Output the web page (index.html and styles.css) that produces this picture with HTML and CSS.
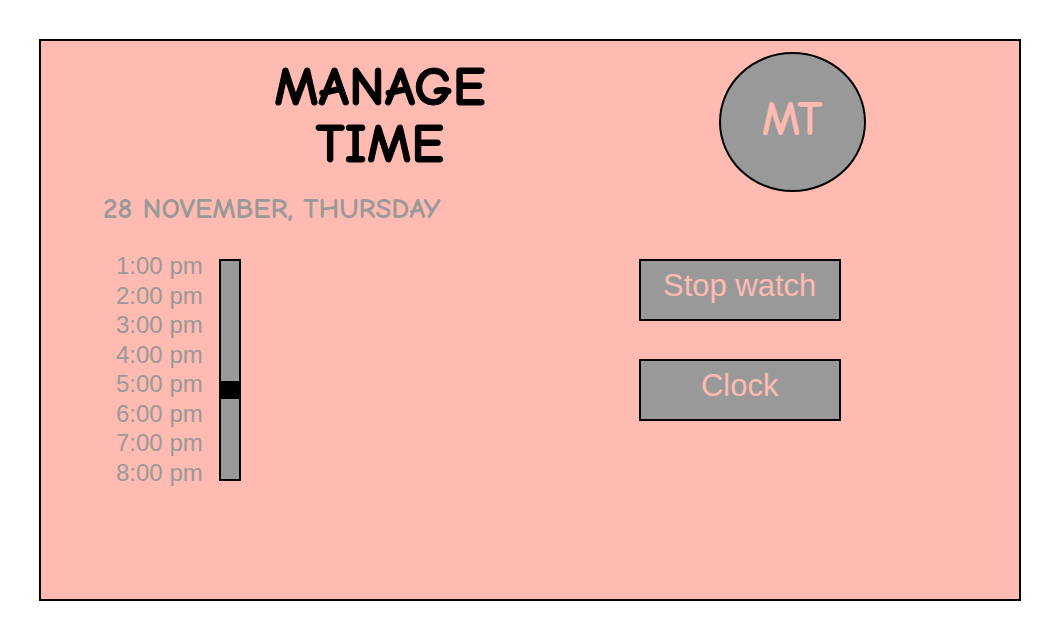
FILE: index.html
```html
<!DOCTYPE html>
<html lang="en">
<head>
<meta charset="utf-8">
<title>Manage Time</title>
<link rel="stylesheet" href="styles.css">
</head>
<body>
<main class="board">
  <section class="schedule">
    <h1 class="title">MANAGE<br>TIME</h1>
    <p class="date">28 NOVEMBER, THURSDAY</p>
    <div class="timeline">
      <ol class="hours">
        <li>1:00 pm</li>
        <li>2:00 pm</li>
        <li>3:00 pm</li>
        <li>4:00 pm</li>
        <li>5:00 pm</li>
        <li>6:00 pm</li>
        <li>7:00 pm</li>
        <li>8:00 pm</li>
      </ol>
      <input class="slider" type="range" min="0" max="100" value="60" aria-label="Time of day">
    </div>
  </section>
  <section class="tools">
    <div class="logo">MT</div>
    <nav class="actions">
      <button class="action" type="button">Stop watch</button>
      <button class="action" type="button">Clock</button>
    </nav>
  </section>
</main>
</body>
</html>
```
FILE: styles.css
```css
* {
  box-sizing: border-box;
}

body {
  margin: 0;
  min-height: 100vh;
  padding: 39px;
  display: flex;
  background: #fff;
  font-family: "Liberation Sans", Arial, sans-serif;
}

.board {
  flex: 1;
  display: grid;
  grid-template-columns: 11fr 7fr;
  border: 2px solid #000;
  background: #ffbbb1;
}

.schedule {
  padding-top: 18px;
}

.title {
  margin: 0;
  padding-left: 80px;
  color: #000;
  font-family: "Comic Neue", "Comic Sans MS", Lato, sans-serif;
  font-size: 55px;
  font-weight: 700;
  line-height: 57px;
  text-align: center;
  -webkit-text-stroke: 1px #000;
}

.date {
  margin: 20px 0 0;
  padding-left: 62px;
  color: #999;
  font-family: "Comic Neue", "Comic Sans MS", Lato, sans-serif;
  font-size: 29px;
  font-weight: 700;
  line-height: 32px;
}

.timeline {
  display: flex;
  align-items: flex-start;
  gap: 16px;
  margin-top: 26px;
  padding-left: 75px;
}

.hours {
  min-height: 236px;
  display: flex;
  flex-direction: column;
  justify-content: space-between;
  margin: 0;
  padding: 0;
  list-style: none;
  color: #999;
  font-size: 24px;
  line-height: 29px;
}

.slider {
  appearance: none;
  width: 22px;
  height: 222px;
  margin: 8px 0 0;
  border: 2px solid #000;
  background: #999;
  writing-mode: vertical-lr;
}

.slider::-webkit-slider-thumb {
  appearance: none;
  width: 18px;
  height: 18px;
  border-radius: 0;
  background: #000;
}

.tools {
  display: flex;
  flex-direction: column;
}

.logo {
  width: 147px;
  height: 140px;
  margin: 11px 0 0 80px;
  border: 2px solid #000;
  border-radius: 50%;
  background: #999;
  color: #ffbbb1;
  font-family: "Comic Neue", "Comic Sans MS", Lato, sans-serif;
  font-size: 48px;
  font-weight: 700;
  line-height: 132px;
  text-align: center;
}

.actions {
  display: flex;
  flex-direction: column;
  gap: 38px;
  margin-top: 67px;
}

.action {
  width: 202px;
  height: 62px;
  padding: 0 0 8px;
  border: 2px solid #000;
  background: #999;
  color: #ffbbb1;
  font: 31px/36px "Liberation Sans", Arial, sans-serif;
}
```
